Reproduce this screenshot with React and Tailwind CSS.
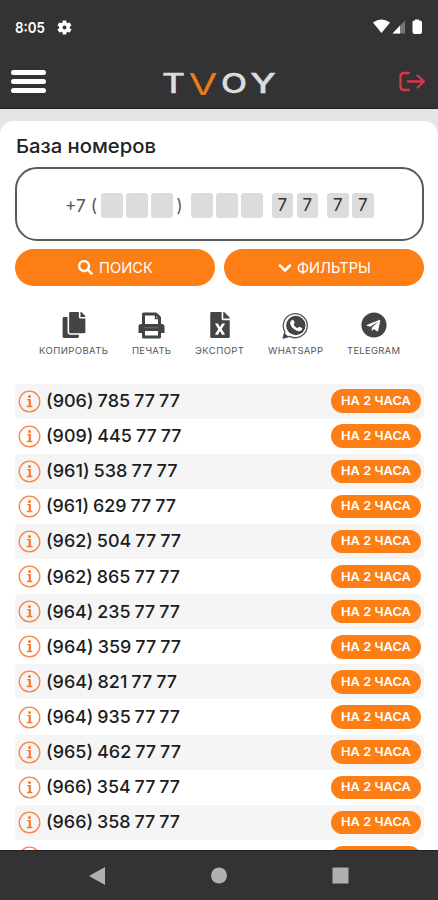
import React from "react";
import { FaCopy, FaSearch, FaFileExcel, FaTelegram } from "react-icons/fa";

const NUMBERS = [
  "(906) 785 77 77", "(909) 445 77 77", "(961) 538 77 77", "(961) 629 77 77",
  "(962) 504 77 77", "(962) 865 77 77", "(964) 235 77 77", "(964) 359 77 77",
  "(964) 821 77 77", "(964) 935 77 77", "(965) 462 77 77", "(966) 354 77 77",
  "(966) 358 77 77",
];

// Rendered text widths, so the condensed and spaced captions keep their measure.
const WIDTHS = [134, 135.5, 131.5, 130, 135, 134, 134, 135, 131, 134, 135, 134, 134];

function Fit({ children, x = 0, y, w, size, weight = 400, fill, className = "" }) {
  return (
    <svg className={"overflow-visible " + className}>
      <text x={x} y={y} textLength={w} lengthAdjust="spacingAndGlyphs" fontSize={size} fontWeight={weight} fill={fill}>
        {children}
      </text>
    </svg>
  );
}

function StatusBar() {
  return (
    <div className="flex h-[54px] items-center justify-between pl-[15px] pr-[15px]">
      <div className="flex items-center text-white">
        <Fit className="h-[20px] w-[41px]" y={15.5} w={30} size={15} weight={600} fill="#fff">8:05</Fit>
        <svg viewBox="0 0 24 24" className="size-[17px]" fill="#fff">
          <path fillRule="evenodd" d="M19.4 13c0-.3.1-.6.1-1s0-.7-.1-1l2.100-1.600c.2-.2.2-.4.1-.6l-2-3.500c-.1-.2-.4-.3-.6-.2l-2.500 1c-.5-.4-1.100-.7-1.700-1l-.4-2.600c0-.3-.2-.5-.5-.5h-4c-.3 0-.5.2-.5.500L9.100 5.100c-.6.2-1.200.6-1.700 1l-2.500-1c-.2-.1-.5 0-.6.200l-2 3.500c-.1.2-.1.500.1.600L4.500 11v2l-2.100 1.600c-.2.200-.2.400-.1.600l2 3.500c.1.200.4.300.6.200l2.500-1c.5.400 1.100.7 1.700 1l.4 2.600c0 .300.2.500.5.500h4c.3 0 .5-.2.500-.5l.4-2.600c.6-.2 1.200-.6 1.700-1l2.500 1c.2.100.5 0 .6-.2l2-3.500c.1-.2.1-.5-.1-.6zM12 14.800a2.800 2.800 0 1 1 0-5.600 2.800 2.800 0 0 1 0 5.600z" />
        </svg>
      </div>
      <svg className="h-[16px] w-[50px]" viewBox="374 19 50 16" fill="#fff">
        <path d="M374 22.500q8.500-6 17 0L382.500 33z" />
        <path d="M393.500 33.500 406 20.500v13z" fill="#777" />
        <path d="M393.500 33.500 401 25.500v8z" />
        <path d="M416 19.500h4v1h1q2 0 2 2v9.500q0 2-2 2h-5.500q-2 0-2-2v-9.500q0-2 1.500-2h1z" />
      </svg>
    </div>
  );
}

function Header() {
  return (
    <div className="flex h-[54px] items-center justify-between pl-[11px] pr-[13px]">
      <div className="flex h-[23px] w-[35px] flex-col justify-between">
        <i className="h-[5px] rounded-full bg-white" />
        <i className="h-[5px] rounded-full bg-white" />
        <i className="h-[5px] rounded-full bg-white" />
      </div>
      <svg className="ml-[-6px] h-[30px] w-[116px] overflow-visible" viewBox="161 66 116 30" fontSize="27" fontWeight="500" fill="#dcdcdc" stroke="#dcdcdc" strokeWidth="0.400">
        <text x="162" y="93" textLength="23" lengthAdjust="spacingAndGlyphs">T</text>
        <text x="188.500" y="94.500" textLength="29" lengthAdjust="spacingAndGlyphs" fill="#e57c1f" stroke="none" fontSize="30" fontWeight="400">V</text>
        <text x="221" y="93" textLength="26" lengthAdjust="spacingAndGlyphs">O</text>
        <text x="250" y="93" textLength="26" lengthAdjust="spacingAndGlyphs">Y</text>
      </svg>
      <svg className="h-[22px] w-[28px]" viewBox="397 70 28 22" fill="none" stroke="#dc3545" strokeWidth="2.300" strokeLinecap="round" strokeLinejoin="round">
        <path d="M409 73h-5q-3.500 0-3.500 3.500v10q0 3.500 3.500 3.500h5M408 81.500h15.500M417.500 75.500l6.500 6-6.500 6" />
      </svg>
    </div>
  );
}

function Digit({ children }) {
  return (
    <span className="flex h-[24.500px] w-[21.500px] items-center justify-center rounded-[3px] bg-[#dcdcdc] text-[17px] text-[#333]">
      {children}
    </span>
  );
}

function PhoneMask() {
  return (
    <div className="mt-[10px] flex h-[74px] items-center rounded-[22px] border-2 border-[#5a5a5a] pl-[46.500px] pt-[3px]">
      <Fit className="h-[24px] w-[37.500px]" x={1} y={18} w={32} size={17.5} fill="#555">+7 (</Fit>
      <div className="flex gap-[3.500px]"><Digit /><Digit /><Digit /></div>
      <Fit className="h-[24px] w-[18.500px]" x={3.5} y={18} w={6} size={17.5} fill="#555">)</Fit>
      <div className="flex gap-[3.500px]"><Digit /><Digit /><Digit /></div>
      <div className="ml-[9px] flex gap-[3.500px]"><Digit>7</Digit><Digit>7</Digit></div>
      <div className="ml-[9px] flex gap-[3.500px]"><Digit>7</Digit><Digit>7</Digit></div>
    </div>
  );
}

function PrintIcon() {
  return (
    <svg viewBox="0 0 27 27" className="size-[27px]" fill="none" stroke="#444">
      <path d="M5.500 13V2h12.500l3.500 3.500V13M5.500 19v6h16v-6" strokeWidth="3" strokeLinejoin="round" />
      <path d="M17.500 2v4.500h4" strokeWidth="1.500" />
      <path d="M3 12h21q2.500 0 2.500 2.500V21h-5.500v-2H6v2H.5v-6.500Q.5 12 3 12z" fill="#444" stroke="none" />
      <path d="M6.500 15.700h14" stroke="#777" strokeWidth="0.800" />
    </svg>
  );
}

function WhatsappIcon() {
  return (
    <svg viewBox="0 0 27 27" className="size-[27px]">
      <path d="M1.200 26l1.700-6.300A12 12 0 1 1 7.700 24.300z" fill="#fff" stroke="#555" strokeWidth="1.300" strokeLinejoin="round" />
      <path d="M1 26.300l1.500-5.300 4 3.800z" fill="#444" />
      <circle cx="13.800" cy="13.500" r="9.700" fill="#444" />
      <path d="M10.300 8c.6-.3 1.200-.1 1.400.4l.9 2.200c.1.400 0 .7-.2 1l-.8 1c.9 1.700 2.200 2.900 4 3.700l1.100-1.300c.3-.3.6-.3.9-.2l2.200 1.100c.4.200.5.500.4.900-.3 1.800-2 2.700-3.700 2.400-4.200-.9-7.600-4.200-8.300-7.600-.3-1.500.6-3 2.100-3.600z" fill="#fff" />
    </svg>
  );
}

function Action({ icon, label, width, gap = "" }) {
  return (
    <div className={"flex flex-col items-center text-[#444] " + gap}>
      <div className="flex h-[28px] items-center">{icon}</div>
      <svg className="mt-[4px] h-[14px] overflow-visible" width={width}>
        <text y="10.600" textLength={width} fontSize="9.500" fill="#555">{label}</text>
      </svg>
    </div>
  );
}

function InfoIcon() {
  return (
    <svg viewBox="0 0 23 23" className="size-[23px]">
      <circle cx="11.500" cy="11.500" r="10.300" fill="none" stroke="#fb8442" strokeWidth="1.300" />
      <circle cx="11.500" cy="6.500" r="1.500" fill="#f9772e" />
      <path d="M9.200 9.600h2.800v6.600M8.800 16.500h5.600" fill="none" stroke="#f9772e" strokeWidth="1.300" />
      <path d="M11.700 9.300v7" stroke="#f9772e" strokeWidth="2" />
    </svg>
  );
}

function Row({ number, width, striped }) {
  return (
    <div className={"flex h-[35.120px] shrink-0 items-center justify-between rounded-[5px] pl-[3px] pr-[3px] " + (striped ? "bg-[#f5f5f5]" : "")}>
      <div className="flex items-center">
        <InfoIcon />
        {number && <Fit className="ml-[4px] h-[24px] w-[140px] [word-spacing:-0.800px]" x={1} y={18.4} w={width} size={17.8} weight={500} fill="#1c1c1c">{number}</Fit>}
      </div>
      <div className="flex h-[23.500px] w-[90px] items-center justify-center rounded-full bg-[#fd7e14]">
        {number && <Fit className="h-[18px] w-[70px]" y={13.4} w={70} size={12.2} weight={600} fill="#fff">НА 2 ЧАСА</Fit>}
      </div>
    </div>
  );
}

export default function App() {
  return (
    <div className="flex h-[900px] w-[438px] flex-col overflow-hidden bg-[#e5e5e5] font-['Inter','Liberation_Sans',sans-serif]">
      <header className="h-[109px] shrink-0 border-b border-[#222] bg-[#333]">
        <StatusBar />
        <Header />
      </header>
      <main className="mt-[12px] flex min-h-0 flex-1 flex-col overflow-hidden rounded-t-[14px] bg-white pl-[15px] pr-[14px]">
        <h1 className="mt-[12px] h-[24px] shrink-0">
          <Fit className="h-[28px] w-[150px]" x={1} y={20} w={140} size={18.7} weight={500} fill="#222">База номеров</Fit>
        </h1>
        <div className="shrink-0"><PhoneMask /></div>
        <div className="mt-[8px] flex h-[37px] shrink-0 gap-[9px] text-white">
          <button className="flex w-[200px] items-center justify-center gap-[6px] rounded-full bg-[#fd7e14]">
            <FaSearch className="size-[15px]" />
            <Fit className="h-[20px] w-[54px]" y={15} w={54} size={15} fill="#fff">ПОИСК</Fit>
          </button>
          <button className="flex w-[200px] items-center justify-center gap-[5px] rounded-full bg-[#fd7e14]">
            <svg viewBox="0 0 14 10" className="h-[10px] w-[14px]" fill="none" stroke="#fff" strokeWidth="2.500" strokeLinecap="round" strokeLinejoin="round"><path d="M2 2.500l5 5 5-5" /></svg>
            <Fit className="h-[20px] w-[74px]" y={15} w={74} size={15} fill="#fff">ФИЛЬТРЫ</Fit>
          </button>
        </div>
        <div className="mt-[25px] flex h-[50px] shrink-0 pl-[24px]">
          <Action icon={<FaCopy className="size-[26px]" />} label="КОПИРОВАТЬ" width={69} />
          <Action icon={<PrintIcon />} label="ПЕЧАТЬ" width={39} gap="ml-[24px]" />
          <Action icon={<FaFileExcel className="size-[26px]" />} label="ЭКСПОРТ" width={49} gap="ml-[24px]" />
          <Action icon={<WhatsappIcon />} label="WHATSAPP" width={55} gap="ml-[24px]" />
          <Action icon={<FaTelegram className="size-[26px]" />} label="TELEGRAM" width={53} gap="ml-[24px]" />
        </div>
        <div className="mt-[22.500px] flex min-h-0 flex-1 flex-col overflow-hidden">
          {NUMBERS.map((n, i) => <Row key={n} number={n} width={WIDTHS[i]} striped={i % 2 === 0} />)}
          <Row />
        </div>
      </main>
      <nav className="flex h-[50px] shrink-0 items-center border-t border-[#222] bg-[#333]">
        <svg className="h-[24px] w-full" viewBox="0 0 438 24" fill="#b0b0b0">
          <path d="M105 3v18L89 12z" />
          <circle cx="219" cy="11.500" r="8" />
          <path d="M332.500 3.500h16v16h-16z" />
        </svg>
      </nav>
    </div>
  );
}
